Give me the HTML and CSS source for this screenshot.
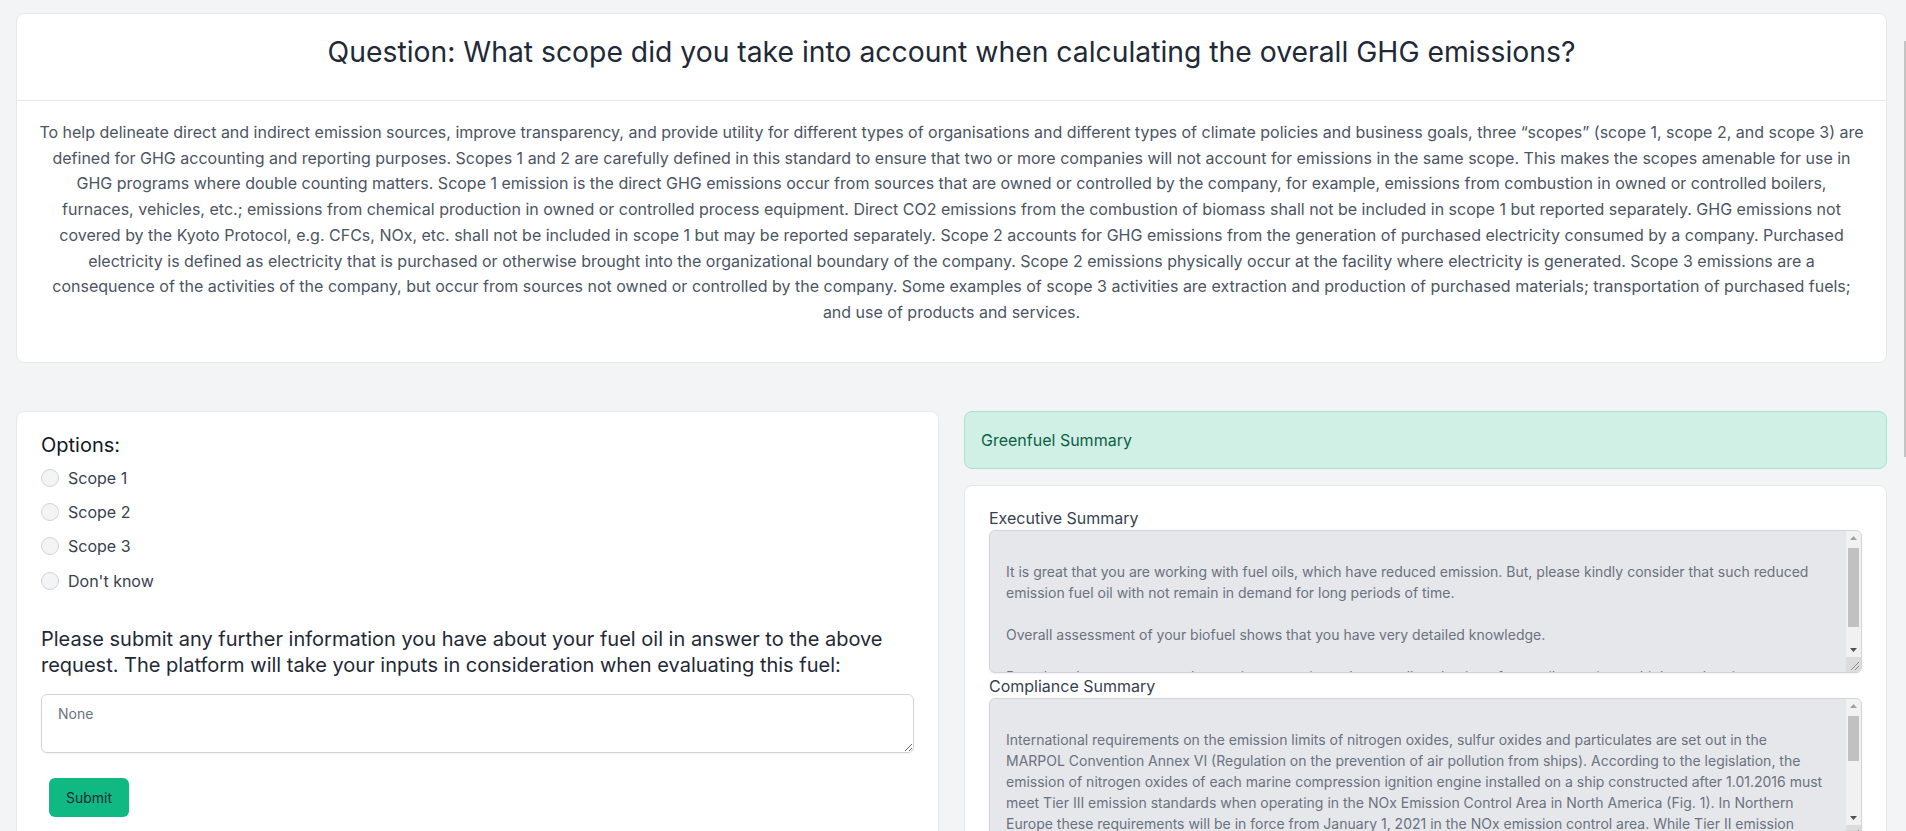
FILE: index.html
```html
<!DOCTYPE html>
<html lang="en">
<head>
<meta charset="utf-8">
<title>Question</title>
<link rel="stylesheet" href="styles.css">
</head>
<body>
<div class="page">
  <section class="card question">
    <header class="question-header">
      <h1 class="question-title">Question: What scope did you take into account when calculating the overall GHG emissions?</h1>
    </header>
    <div class="question-body">
      <p class="question-text">To help delineate direct and indirect emission sources, improve transparency, and provide utility for different types of organisations and different types of climate policies and business goals, three “scopes” (scope 1, scope 2, and scope 3) are<br>
defined for GHG accounting and reporting purposes. Scopes 1 and 2 are carefully defined in this standard to ensure that two or more companies will not account for emissions in the same scope. This makes the scopes amenable for use in<br>
GHG programs where double counting matters. Scope 1 emission is the direct GHG emissions occur from sources that are owned or controlled by the company, for example, emissions from combustion in owned or controlled boilers,<br>
furnaces, vehicles, etc.; emissions from chemical production in owned or controlled process equipment. Direct CO2 emissions from the combustion of biomass shall not be included in scope 1 but reported separately. GHG emissions not<br>
covered by the Kyoto Protocol, e.g. CFCs, NOx, etc. shall not be included in scope 1 but may be reported separately. Scope 2 accounts for GHG emissions from the generation of purchased electricity consumed by a company. Purchased<br>
electricity is defined as electricity that is purchased or otherwise brought into the organizational boundary of the company. Scope 2 emissions physically occur at the facility where electricity is generated. Scope 3 emissions are a<br>
consequence of the activities of the company, but occur from sources not owned or controlled by the company. Some examples of scope 3 activities are extraction and production of purchased materials; transportation of purchased fuels;<br>
and use of products and services.</p>
    </div>
  </section>

  <div class="columns">
    <section class="card answer">
      <h5 class="options-title">Options:</h5>
      <div class="options">
        <label class="option"><input type="radio" name="scope" class="radio"><span>Scope 1</span></label>
        <label class="option"><input type="radio" name="scope" class="radio"><span>Scope 2</span></label>
        <label class="option"><input type="radio" name="scope" class="radio"><span>Scope 3</span></label>
        <label class="option"><input type="radio" name="scope" class="radio"><span>Don't know</span></label>
      </div>
      <p class="prompt">Please submit any further information you have about your fuel oil in answer to the above request. The platform will take your inputs in consideration when evaluating this fuel:</p>
      <textarea class="input-area" placeholder="None"></textarea>
      <button class="submit" type="button">Submit</button>
    </section>

    <div class="summary-col">
      <div class="alert">Greenfuel Summary</div>
      <section class="card summary">
        <label class="field-label">Executive Summary</label>
        <div class="readout-wrap">
          <textarea class="readout" readonly>

It is great that you are working with fuel oils, which have reduced emission. But, please kindly consider that such reduced emission fuel oil with not remain in demand for long periods of time.

Overall assessment of your biofuel shows that you have very detailed knowledge.

Based on the comments to the previous questions, the overall evaluation of your oil contains multiple weak points.</textarea>
          <div class="vscroll" aria-hidden="true">
            <span class="vscroll-btn"><svg viewBox="0 0 15 15" width="15" height="15"><polygon points="4,9 11,9 7.5,5" fill="#a3a3a3"/></svg></span>
            <span class="vscroll-track"><span class="vscroll-thumb thumb-exec"></span></span>
            <span class="vscroll-btn"><svg viewBox="0 0 15 15" width="15" height="15"><polygon points="4,6 11,6 7.5,10" fill="#505050"/></svg></span>
            <span class="vscroll-corner"><svg viewBox="0 0 15 15" width="15" height="15"><path d="M5 13 L13 5 M9 13 L13 9" stroke="#8c8c8c" stroke-width="1"/></svg></span>
          </div>
        </div>
        <label class="field-label">Compliance Summary</label>
        <div class="readout-wrap">
          <textarea class="readout" readonly>

International requirements on the emission limits of nitrogen oxides, sulfur oxides and particulates are set out in the MARPOL Convention Annex VI (Regulation on the prevention of air pollution from ships). According to the legislation, the emission of nitrogen oxides of each marine compression ignition engine installed on a ship constructed after 1.01.2016 must meet Tier III emission standards when operating in the NOx Emission Control Area in North America (Fig. 1). In Northern Europe these requirements will be in force from January 1, 2021 in the NOx emission control area. While Tier II emission standards apply to ships operating outside the emission control areas, the sulphur content of fuel oil used on board ships is limited globally, and stricter limits apply within the designated sulphur emission control areas.

Ship operators can comply with these requirements by using low sulphur fuel oils, alternative fuels such as LNG or biofuels, or by installing approved exhaust gas cleaning systems on board.</textarea>
          <div class="vscroll" aria-hidden="true">
            <span class="vscroll-btn"><svg viewBox="0 0 15 15" width="15" height="15"><polygon points="4,9 11,9 7.5,5" fill="#a3a3a3"/></svg></span>
            <span class="vscroll-track"><span class="vscroll-thumb thumb-compliance"></span></span>
            <span class="vscroll-btn"><svg viewBox="0 0 15 15" width="15" height="15"><polygon points="4,6 11,6 7.5,10" fill="#505050"/></svg></span>
            <span class="vscroll-corner"><svg viewBox="0 0 15 15" width="15" height="15"><path d="M5 13 L13 5 M9 13 L13 9" stroke="#8c8c8c" stroke-width="1"/></svg></span>
          </div>
        </div>
      </section>
    </div>
  </div>
</div>
<div class="page-scroll-thumb"></div>
</body>
</html>
```

FILE: styles.css
```css
html, body {
  margin: 0;
  padding: 0;
  height: 100%;
  overflow: hidden;
}

body {
  background: #f3f4f6;
  font-family: Inter, "Noto Sans", "Liberation Sans", sans-serif;
  color: #1f2937;
}

.page {
  padding: 13px 19px 0 16px;
}

.card {
  background: #ffffff;
  border: 1px solid #e5e7eb;
  border-radius: 8px;
  box-sizing: border-box;
}

.question-header {
  border-bottom: 1px solid #e5e7eb;
  padding: 21px 24px 23px;
  text-align: center;
}

.question-title {
  margin: 0 0 8px;
  font-size: 28.3px;
  line-height: 34px;
  font-weight: 400;
  color: #1f2937;
}

.question-body {
  padding: 19px 18px 20px;
}

.question-text {
  margin: 0 0 16px;
  text-align: center;
  font-size: 16px;
  line-height: 25.7px;
  color: #4b5563;
}

.columns {
  display: grid;
  grid-template-columns: 1fr 1fr;
  column-gap: 25px;
  margin-top: 48px;
  align-items: start;
}

.answer {
  padding: 21px 24px 24px;
  min-height: 460px;
}

.options-title {
  margin: 0 0 9px;
  font-size: 20px;
  line-height: 24px;
  font-weight: 400;
  color: #111827;
}

.options {
  display: flex;
  flex-direction: column;
  gap: 10.3px;
}

.option {
  display: flex;
  align-items: center;
  gap: 9px;
  height: 24px;
  font-size: 16px;
  color: #374151;
}

.radio {
  appearance: none;
  -webkit-appearance: none;
  margin: 0;
  width: 18px;
  height: 18px;
  border: 1px solid #d1d5db;
  border-radius: 50%;
  background: #f3f4f6;
  box-sizing: border-box;
}

.prompt {
  margin: 33px 0 16px;
  font-size: 20px;
  line-height: 26px;
  color: #1f2937;
}

.input-area {
  display: block;
  width: 100%;
  height: 59px;
  box-sizing: border-box;
  border: 1px solid #d1d5db;
  border-radius: 6px;
  padding: 8px 16px;
  font-family: Inter, "Noto Sans", "Liberation Sans", sans-serif;
  font-size: 14px;
  line-height: 21px;
  color: #374151;
  background: #ffffff;
  box-shadow: 0 1px 2px rgba(0, 0, 0, 0.06);
  margin: 0;
}

.input-area::placeholder {
  color: #6b7280;
}

.submit {
  display: block;
  margin: 25px 0 0 8px;
  height: 39px;
  padding: 0 17px;
  border: none;
  border-radius: 6px;
  background: #10b981;
  color: #1f2937;
  font-family: Inter, "Noto Sans", "Liberation Sans", sans-serif;
  font-size: 14px;
}

.summary-col {
  display: flex;
  flex-direction: column;
  gap: 16px;
}

.alert {
  background: #d1f0e5;
  border: 1px solid #a7e3cd;
  border-radius: 8px;
  padding: 16px;
  font-size: 16px;
  line-height: 24px;
  color: #0c6047;
}

.summary {
  padding: 20px 24px 24px;
}

.field-label {
  display: block;
  font-size: 16px;
  line-height: 24px;
  color: #374151;
}

.readout-wrap {
  position: relative;
  margin: 0 0 1px;
}

.readout {
  display: block;
  width: 100%;
  height: 143px;
  box-sizing: border-box;
  margin: 0;
  border: 1px solid #d1d5db;
  border-radius: 6px;
  padding: 9px 35px 9px 16px;
  background: #e5e7eb;
  color: #6b7280;
  font-family: Inter, "Noto Sans", "Liberation Sans", sans-serif;
  font-size: 14px;
  line-height: 21px;
  box-shadow: 0 1px 2px rgba(0, 0, 0, 0.06);
  resize: none;
  overflow: hidden;
}

.vscroll {
  position: absolute;
  top: 1px;
  right: 1px;
  bottom: 1px;
  width: 15px;
  display: flex;
  flex-direction: column;
  background: #f1f1f1;
  border-radius: 0 5px 5px 0;
  overflow: hidden;
}

.vscroll-btn {
  display: block;
  height: 15px;
  flex: none;
}

.vscroll-btn svg,
.vscroll-corner svg {
  display: block;
}

.vscroll-track {
  position: relative;
  flex: 1;
}

.vscroll-thumb {
  position: absolute;
  left: 2px;
  right: 2px;
  top: 2px;
  background: #c1c1c1;
}

.thumb-exec {
  height: 79px;
}

.thumb-compliance {
  height: 45px;
}

.vscroll-corner {
  display: block;
  height: 15px;
  flex: none;
  background: #dcdcdc;
}

.page-scroll-thumb {
  position: fixed;
  top: 41px;
  right: 0;
  width: 2px;
  height: 416px;
  background: #c4c4c4;
}
```
